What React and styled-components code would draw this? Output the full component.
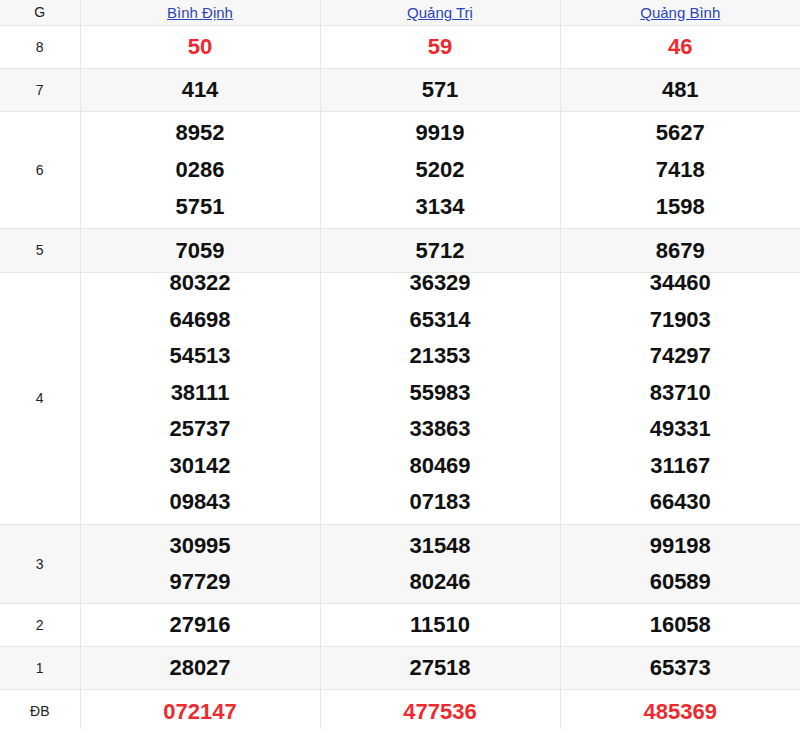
import React from 'react'
import styled, { createGlobalStyle } from 'styled-components'

const GlobalStyle = createGlobalStyle`
  body {
    margin: 0;
    background: #fff;
    font-family: "Liberation Sans", Arial, sans-serif;
  }
`

const provinces = ['Bình Định', 'Quảng Trị', 'Quảng Bình']

// each prize: label, row height, numbers per province
const prizes = [
  { label: '8', h: 43, red: true, cols: [['50'], ['59'], ['46']] },
  { label: '7', h: 43, cols: [['414'], ['571'], ['481']] },
  { label: '6', h: 117, cols: [['8952', '0286', '5751'], ['9919', '5202', '3134'], ['5627', '7418', '1598']] },
  { label: '5', h: 44, cols: [['7059'], ['5712'], ['8679']] },
  {
    label: '4', h: 252, lh: 36.6, shift: -5, cols: [
      ['80322', '64698', '54513', '38111', '25737', '30142', '09843'],
      ['36329', '65314', '21353', '55983', '33863', '80469', '07183'],
      ['34460', '71903', '74297', '83710', '49331', '31167', '66430'],
    ]
  },
  { label: '3', h: 79, lh: 36, cols: [['30995', '97729'], ['31548', '80246'], ['99198', '60589']] },
  { label: '2', h: 43, cols: [['27916'], ['11510'], ['16058']] },
  { label: '1', h: 43, cols: [['28027'], ['27518'], ['65373']] },
  { label: 'ĐB', h: 44, red: true, cols: [['072147'], ['477536'], ['485369']] },
]

const App = () => {
  return (
    <>
      <GlobalStyle />
      <Table>
        <colgroup>
          <col style={{ width: 80 }} />
          <col />
          <col />
          <col />
        </colgroup>
        <thead>
          <HeadRow>
            <HeadCell>G</HeadCell>
            {provinces.map((p) => (
              <HeadCell key={p}>
                <ProvinceLink href="#">{p}</ProvinceLink>
              </HeadCell>
            ))}
          </HeadRow>
        </thead>
        <tbody>
          {prizes.map((prize, index) => (
            <PrizeRow key={prize.label} $shade={index % 2 === 1} $h={prize.h}>
              <LabelCell>{prize.label}</LabelCell>
              {prize.cols.map((nums, i) => (
                <NumCell key={i}>
                  <NumList $h={prize.h - 1} $shift={prize.shift || 0}>
                    {nums.map((n) => (
                      <Num key={n} $red={prize.red} $lh={prize.lh || 37}>{n}</Num>
                    ))}
                  </NumList>
                </NumCell>
              ))}
            </PrizeRow>
          ))}
        </tbody>
      </Table>
    </>
  )
}

const Table = styled.table`
  width: 800px;
  border-collapse: collapse;
  table-layout: fixed;
  color: #111;

  td, th {
    border: 1px solid #e6e6e6;
    padding: 0;
    text-align: center;
    vertical-align: middle;
  }

  tr > :first-child {
    border-left: none;
  }

  tr > :last-child {
    border-right: none;
  }
`

const HeadRow = styled.tr`
  height: 25px;
  background: #f7f7f7;

  th {
    border-top: none;
  }
`

const HeadCell = styled.th`
  font-size: 14px;
  font-weight: normal;
  color: #222;
`

const ProvinceLink = styled.a`
  color: #2b44b7;
  text-decoration: underline;
  font-size: 15px;
`

const PrizeRow = styled.tr`
  height: ${({ $h }) => $h}px;
  background: ${({ $shade }) => ($shade ? '#f7f7f7' : '#fff')};
`

const LabelCell = styled.td`
  font-size: 14px;
  color: #222;
`

const NumCell = styled.td``

const NumList = styled.div`
  height: ${({ $h }) => $h}px;
  display: flex;
  flex-direction: column;
  align-items: center;
  justify-content: center;
  transform: translateY(${({ $shift }) => $shift}px);
`

const Num = styled.span`
  flex: none;
  font-size: 22px;
  font-weight: bold;
  line-height: ${({ $lh }) => $lh}px;
  color: ${({ $red }) => ($red ? '#ee2a2f' : '#111')};
`

export default App
